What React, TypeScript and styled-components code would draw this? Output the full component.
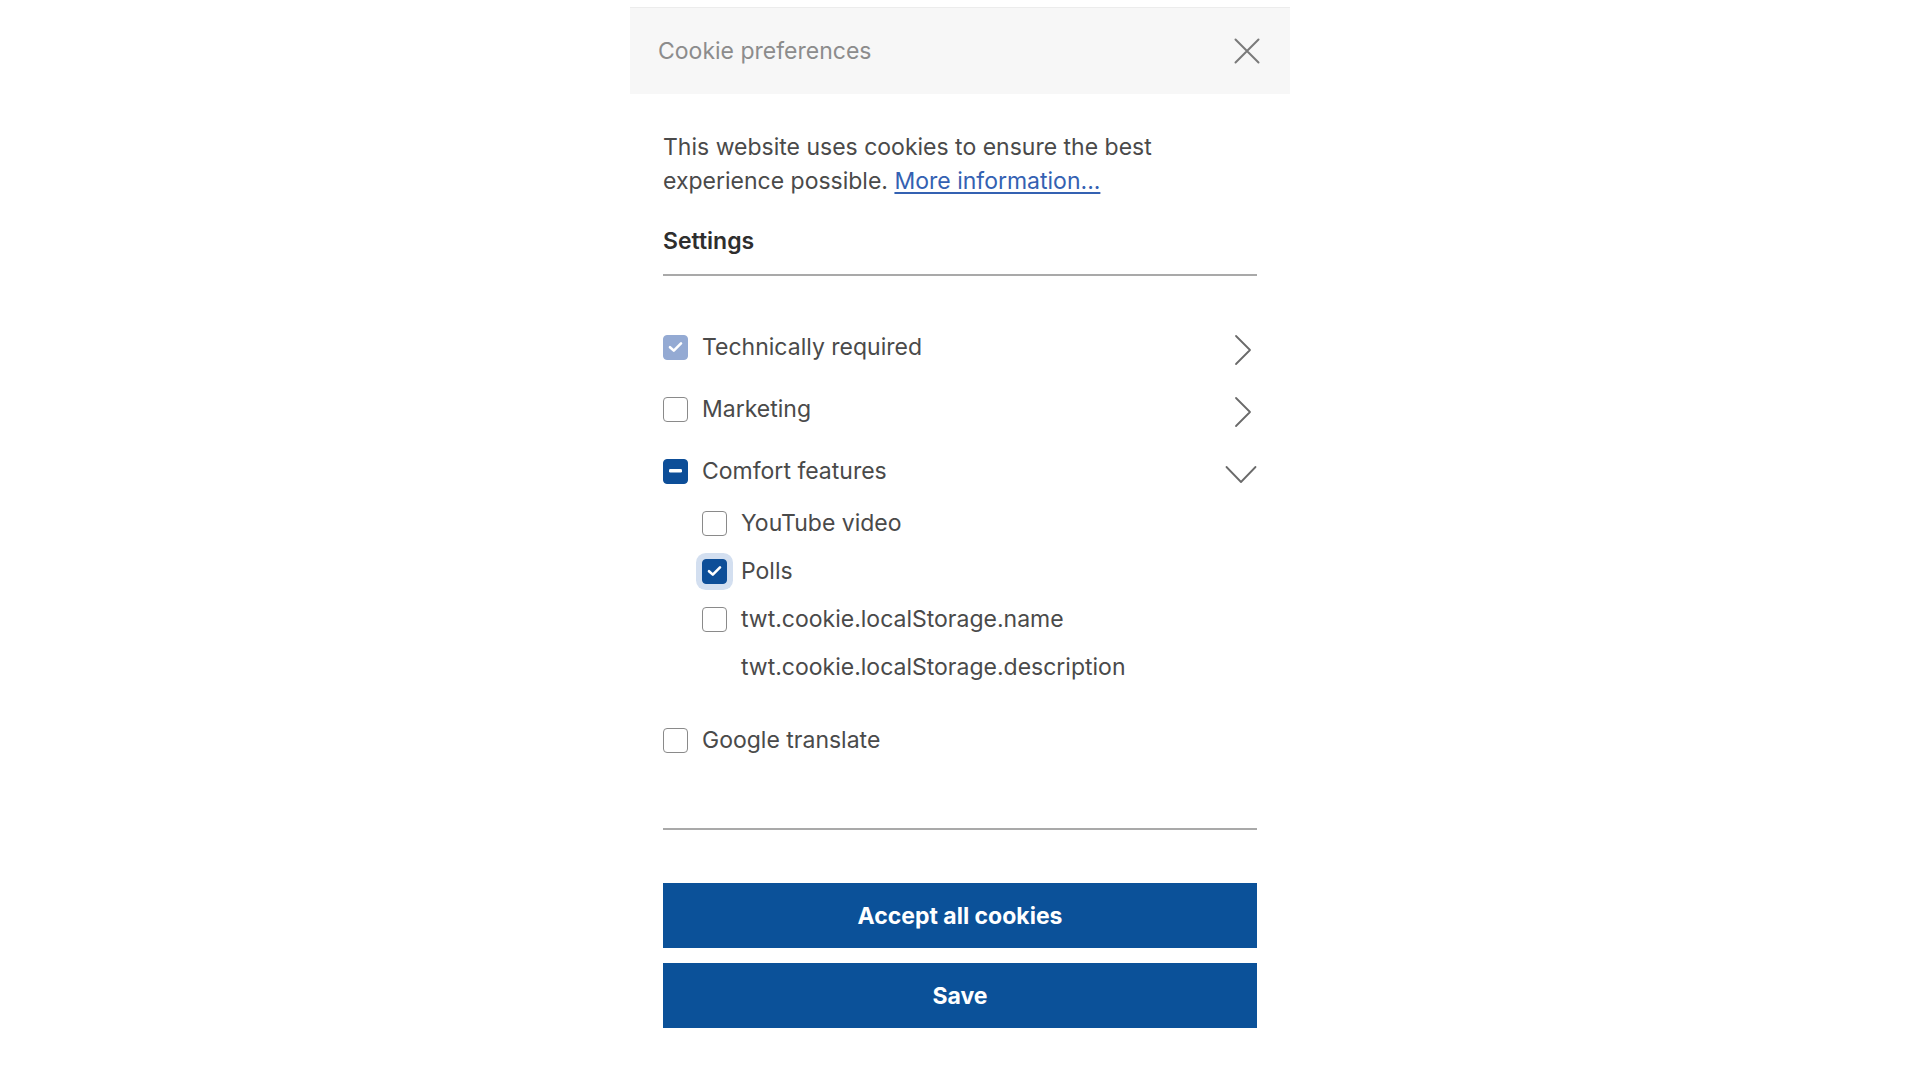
import React, { useState } from "react";
import styled, { createGlobalStyle, css } from "styled-components";

const GlobalStyle = createGlobalStyle`
    html, body {
        margin: 0;
        padding: 0;
        background: #ffffff;
    }

    body {
        font-family: Inter, "Noto Sans", "Liberation Sans", sans-serif;
        color: #444444;
    }
`;

const Panel = styled.section`
    width: 660px;
    margin: 8px auto 0;
    background: #ffffff;
    box-shadow: 0 -1px 0 #ececec;
`;

const Header = styled.header`
    display: flex;
    align-items: center;
    justify-content: space-between;
    height: 86px;
    padding: 0 29px 0 28px;
    background: #f7f7f7;
`;

const Title = styled.h2`
    margin: 0;
    font-size: 23px;
    font-weight: 400;
    color: #8c8c8c;
`;

const CloseButton = styled.button`
    display: flex;
    align-items: center;
    justify-content: center;
    width: 28px;
    height: 28px;
    padding: 0;
    border: none;
    background: none;
    cursor: pointer;
`;

const Body = styled.div`
    padding: 0 33px 48px;
`;

const Intro = styled.p`
    margin: 36px 0 0;
    font-size: 23px;
    line-height: 34px;
    color: #4a4a4a;
`;

const MoreLink = styled.a`
    color: #3461b2;
    text-decoration: underline;
    text-underline-offset: 3px;
`;

const SettingsTitle = styled.h3`
    margin: 28px 0 0;
    font-size: 23px;
    line-height: 30px;
    font-weight: 600;
    color: #2e2e2e;
`;

const Divider = styled.hr<{ $top: number }>`
    margin: ${({ $top }) => $top}px 0 0;
    border: none;
    border-top: 2px solid #a9a9a9;
`;

const List = styled.ul`
    list-style: none;
    margin: 0;
    padding: 40px 0 0;
`;

const Row = styled.li<{ $sub?: boolean }>`
    display: flex;
    align-items: center;
    gap: 14px;
    height: ${({ $sub }) => ($sub ? 48 : 62)}px;
    padding-left: ${({ $sub }) => ($sub ? 39 : 0)}px;
    font-size: 23px;
    color: #4a4a4a;
`;

const SubList = styled.ul`
    list-style: none;
    margin: -3px 0 0;
    padding: 0 0 18px;
`;

const Description = styled.li`
    display: flex;
    align-items: center;
    height: 48px;
    padding-left: 78px;
    font-size: 23px;
    color: #4a4a4a;
`;

const Label = styled.span`
    flex: 1;
`;

type BoxState = "off" | "on" | "mixed" | "locked";

const Box = styled.span<{ $state: BoxState; $focus?: boolean }>`
    flex: none;
    display: flex;
    align-items: center;
    justify-content: center;
    width: 25px;
    height: 25px;
    box-sizing: border-box;
    border-radius: 4px;
    border: 1.5px solid #8a8a8a;
    background: #ffffff;

    ${({ $state }) =>
        $state === "locked" &&
        css`
            border-color: #94aad3;
            background: #94aad3;
        `};

    ${({ $state }) =>
        ($state === "on" || $state === "mixed") &&
        css`
            border-color: #0d4e98;
            background: #0d4e98;
        `};

    ${({ $focus }) =>
        $focus &&
        css`
            box-shadow: 0 0 0 6px #d3dff0;
        `};
`;

const Toggle = styled.button`
    display: flex;
    align-items: center;
    justify-content: flex-end;
    width: 32px;
    height: 32px;
    margin-top: 6px;
    padding: 0;
    border: none;
    background: none;
    cursor: pointer;
`;

const Actions = styled.div`
    display: flex;
    flex-direction: column;
    gap: 15px;
    margin-top: 53px;
`;

const PrimaryButton = styled.button`
    height: 65px;
    border: none;
    background: #0b5199;
    color: #ffffff;
    font-family: Inter, "Noto Sans", "Liberation Sans", sans-serif;
    font-size: 23px;
    font-weight: 700;
    cursor: pointer;
    transition: 0.3s;

    &:hover {
        background: #0a4786;
    };
`;

const CheckMark = () => (
    <svg width="15" height="12" viewBox="0 0 15 12" fill="none">
        <path d="M2 6.2 L5.8 9.6 L13 2.4" stroke="#ffffff" strokeWidth="2.6" strokeLinecap="round" strokeLinejoin="round" />
    </svg>
);

const Dash = () => (
    <svg width="13" height="4" viewBox="0 0 13 4">
        <rect x="0" y="0" width="13" height="3.4" rx="1.2" fill="#ffffff" />
    </svg>
);

const Checkbox = ({ state, focus }: { state: BoxState; focus?: boolean }) => (
    <Box $state={state} $focus={focus}>
        {(state === "on" || state === "locked") && <CheckMark />}
        {state === "mixed" && <Dash />}
    </Box>
);

const ChevronRight = () => (
    <svg width="24" height="32" viewBox="0 0 24 32" fill="none">
        <path d="M3 2 L17 16 L3 30" stroke="#6a6a6a" strokeWidth="1.8" strokeLinecap="round" strokeLinejoin="round" />
    </svg>
);

const ChevronDown = () => (
    <svg width="32" height="19" viewBox="0 0 32 19" fill="none">
        <path d="M1.5 2 L16 17 L30.5 2" stroke="#6a6a6a" strokeWidth="1.8" strokeLinecap="round" strokeLinejoin="round" />
    </svg>
);

const CloseIcon = () => (
    <svg width="26" height="26" viewBox="0 0 26 26" fill="none">
        <path d="M1.5 1.5 L24.5 24.5 M24.5 1.5 L1.5 24.5" stroke="#7a7a7a" strokeWidth="2" strokeLinecap="round" />
    </svg>
);

const subItems: { name: string; state: BoxState; focus?: boolean }[] = [
    { name: "YouTube video", state: "off" },
    { name: "Polls", state: "on", focus: true },
    { name: "twt.cookie.localStorage.name", state: "off" },
];

export default function App() {
    const [open, setOpen] = useState(true);

    return (
        <>
            <GlobalStyle />
            <Panel>
                <Header>
                    <Title>Cookie preferences</Title>
                    <CloseButton aria-label="Close">
                        <CloseIcon />
                    </CloseButton>
                </Header>
                <Body>
                    <Intro>
                        This website uses cookies to ensure the best experience possible.{" "}
                        <MoreLink href="#">More information...</MoreLink>
                    </Intro>
                    <SettingsTitle>Settings</SettingsTitle>
                    <Divider $top={18} />
                    <List>
                        <Row>
                            <Checkbox state="locked" />
                            <Label>Technically required</Label>
                            <Toggle aria-label="Expand">
                                <ChevronRight />
                            </Toggle>
                        </Row>
                        <Row>
                            <Checkbox state="off" />
                            <Label>Marketing</Label>
                            <Toggle aria-label="Expand">
                                <ChevronRight />
                            </Toggle>
                        </Row>
                        <Row>
                            <Checkbox state="mixed" />
                            <Label>Comfort features</Label>
                            <Toggle aria-label="Collapse" onClick={() => setOpen(!open)}>
                                {open ? <ChevronDown /> : <ChevronRight />}
                            </Toggle>
                        </Row>
                        {open && (
                            <SubList>
                                {subItems.map((item) => (
                                    <Row $sub key={item.name}>
                                        <Checkbox state={item.state} focus={item.focus} />
                                        <Label>{item.name}</Label>
                                    </Row>
                                ))}
                                <Description>twt.cookie.localStorage.description</Description>
                            </SubList>
                        )}
                        <Row>
                            <Checkbox state="off" />
                            <Label>Google translate</Label>
                        </Row>
                    </List>
                    <Divider $top={57} />
                    <Actions>
                        <PrimaryButton>Accept all cookies</PrimaryButton>
                        <PrimaryButton>Save</PrimaryButton>
                    </Actions>
                </Body>
            </Panel>
        </>
    );
}
